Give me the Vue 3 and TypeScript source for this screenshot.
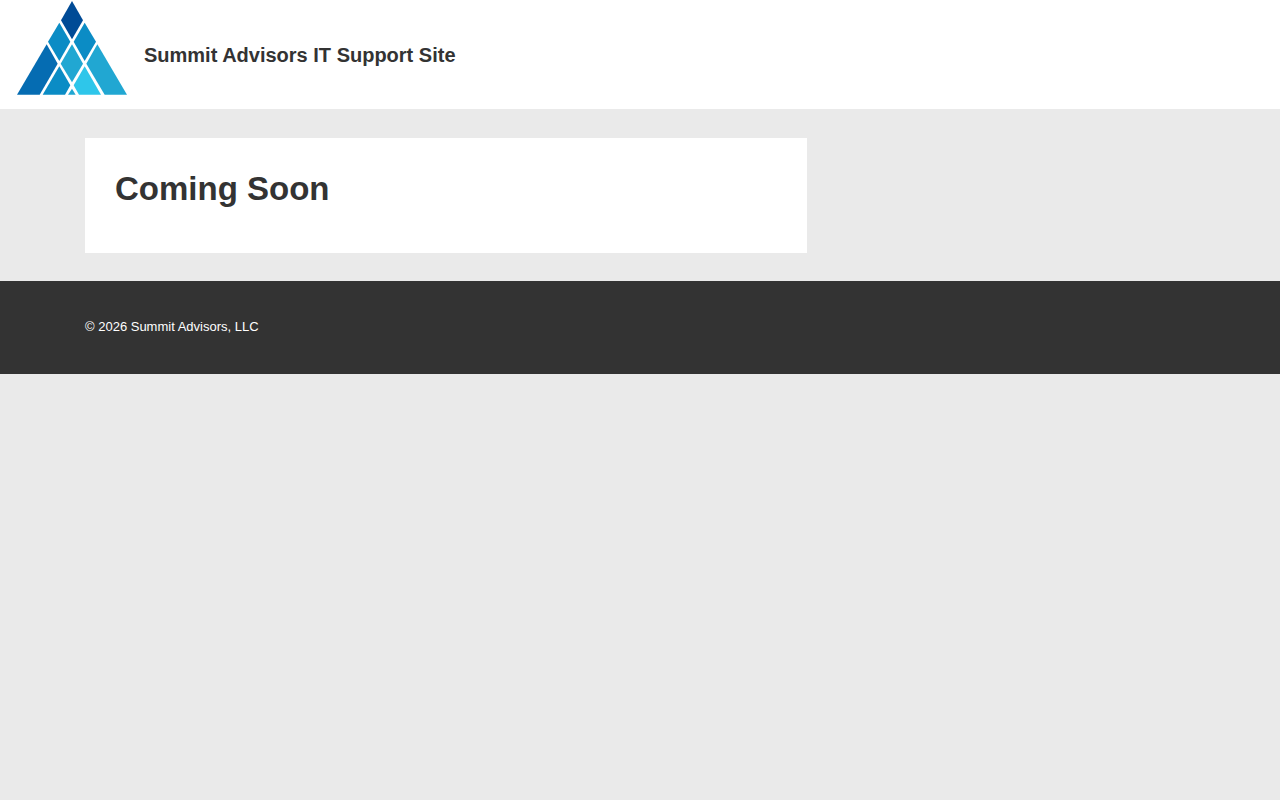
<script setup lang="ts">
interface Facet {
  points: string
  fill: string
}

const siteTitle = 'Summit Advisors IT Support Site'
const copyright = '© 2026 Summit Advisors, LLC'

const facets: Facet[] = [
  { points: '186,3 219,61 186,118 153,61', fill: '#004b96' },
  { points: '148,68 181,125 148,183 114,125', fill: '#0b8cc5' },
  { points: '224,68 258,125 224,183 191,125', fill: '#0b8cc5' },
  { points: '186,133 219,191 186,247 152,191', fill: '#21a7d2' },
  { points: '110,133 143,191 89,284 21,284', fill: '#056cb2' },
  { points: '262,133 351,284 284,284 229,191', fill: '#21a7d2' },
  { points: '148,199 181,256 165,284 98,284', fill: '#0b8cc5' },
  { points: '224,199 273,284 207,284 191,256', fill: '#2ec6ea' },
  { points: '186,266 197,284 174,284', fill: '#21a7d2' },
]
</script>

<template>
  <div class="site">
    <header class="site-header">
      <svg class="logo" viewBox="21 0 330 288" role="img" aria-label="Summit Advisors">
        <polygon v-for="facet in facets" :key="facet.points" :points="facet.points" :fill="facet.fill" />
      </svg>
      <p class="site-title">{{ siteTitle }}</p>
    </header>
    <main class="container content">
      <article class="card">
        <h1>Coming Soon</h1>
      </article>
    </main>
    <footer class="site-footer">
      <p class="container">{{ copyright }}</p>
    </footer>
  </div>
</template>

<style>
body {
  margin: 0;
  background: #eaeaea;
}
</style>

<style scoped>
.site {
  color: #333;
  font-family: "Liberation Sans", Arial, sans-serif;
}

.container {
  box-sizing: border-box;
  max-width: 1140px;
  margin: 0 auto;
  padding: 0 15px;
}

.site-header {
  display: flex;
  align-items: center;
  gap: 17px;
  padding: 0 17px;
  background: #fff;
}

.logo {
  flex: none;
  width: 110px;
  height: 96px;
  margin-bottom: 13px;
}

.site-title {
  margin: 0;
  font-size: 20px;
  line-height: 30px;
  font-weight: 700;
}

.content {
  padding-top: 29px;
  padding-bottom: 28px;
}

.card {
  box-sizing: border-box;
  width: 65%;
  padding: 30px;
  background: #fff;
}

h1 {
  margin: 0 0 13px;
  font-size: 33px;
  line-height: 42px;
}

.site-footer {
  padding: 36px 0 37px;
  background: #333;
  color: #fff;
  font-size: 13px;
  line-height: 20px;
}
</style>
